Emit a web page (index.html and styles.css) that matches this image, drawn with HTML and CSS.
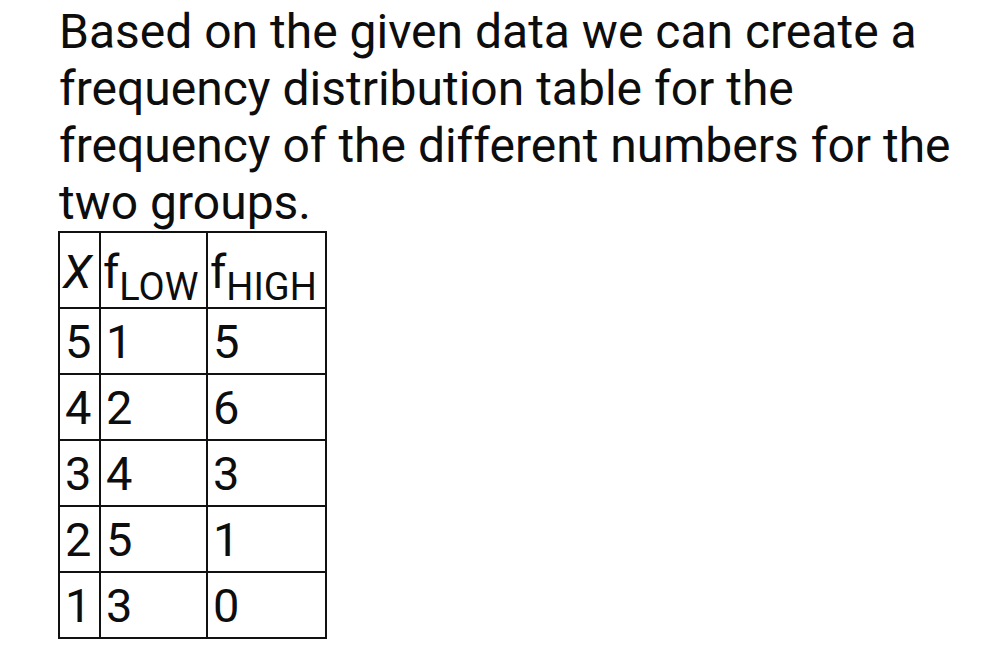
FILE: index.html
```html
<!DOCTYPE html>
<html>
<head>
<meta charset="utf-8">
<link rel="stylesheet" href="styles.css">
</head>
<body>
<div class="page">
  <p class="intro">Based on the given data we can create a frequency distribution table for the frequency of the different numbers for the two groups.</p>
  <table class="freq">
    <colgroup>
      <col class="c1"><col class="c2"><col class="c3">
    </colgroup>
    <tr class="head">
      <td><span class="x">X</span></td>
      <td>f<sub>LOW</sub></td>
      <td>f<sub>HIGH</sub></td>
    </tr>
    <tr><td>5</td><td>1</td><td>5</td></tr>
    <tr><td>4</td><td>2</td><td>6</td></tr>
    <tr><td>3</td><td>4</td><td>3</td></tr>
    <tr><td>2</td><td>5</td><td>1</td></tr>
    <tr><td>1</td><td>3</td><td>0</td></tr>
  </table>
</div>
</body>
</html>
```
FILE: styles.css
```css
html, body {
  margin: 0;
  padding: 0;
  background: #fff;
}
.page {
  padding: 3px 0 0 59px;
  font-family: Roboto, "Liberation Sans", sans-serif;
  color: #0d0d0d;
}
.intro {
  margin: 0;
  width: 910px;
  font-size: 48px;
  line-height: 57px;
}
.freq {
  margin-top: 0;
  margin-left: -1px;
  border-collapse: collapse;
  font-size: 47px;
  table-layout: fixed;
}
.c1 { width: 41px; }
.c2 { width: 107px; }
.c3 { width: 119px; }
.freq td {
  border: 2px solid #111;
  padding: 0 0 0 5px;
  height: 64px;
  vertical-align: middle;
  line-height: 1;
  overflow: visible;
  white-space: nowrap;
}
.freq .head td {
  height: 72px;
  padding-top: 2px;
  padding-left: 2px;
}
.freq .head td:first-child { padding-left: 3px; }
.x {
  font-style: italic;
  font-size: 47px;
}
.freq sub {
  font-size: 38px;
  vertical-align: -12px;
  line-height: 0;
}
```
